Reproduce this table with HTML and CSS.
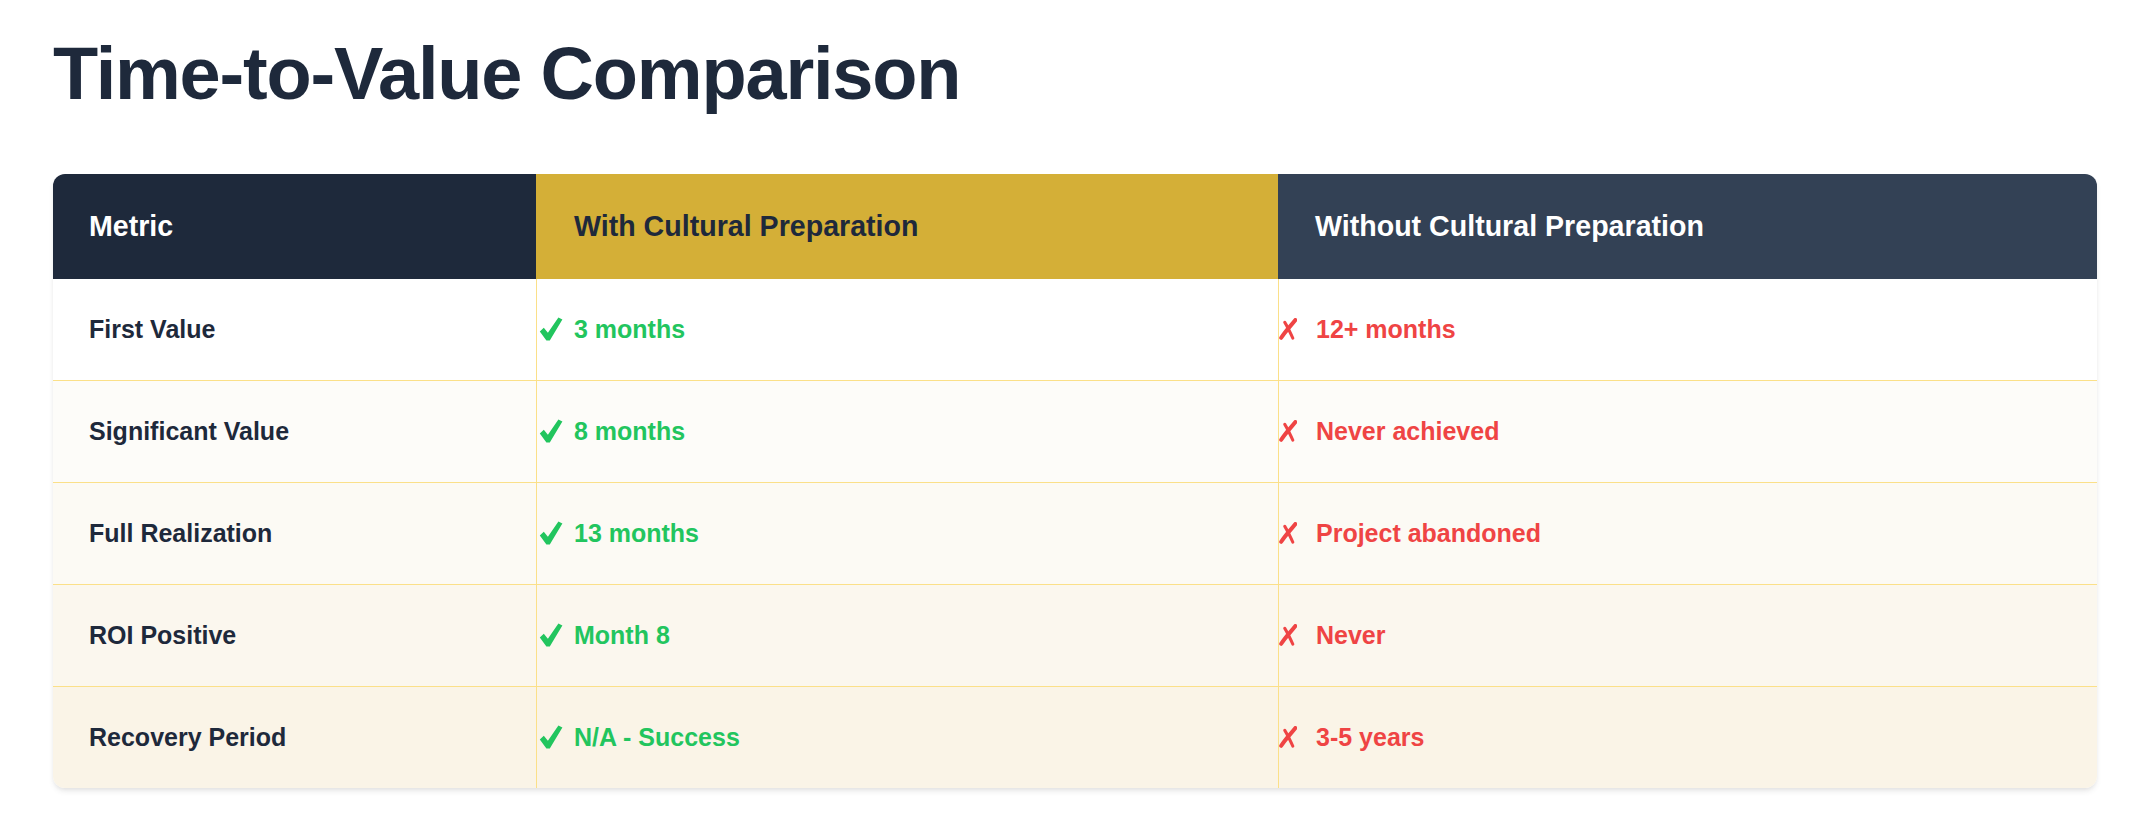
FILE: index.html
```html
<!DOCTYPE html>
<html lang="en">
<head>
<meta charset="utf-8">
<title>Time-to-Value Comparison</title>
<link rel="stylesheet" href="styles.css">
</head>
<body>
<main class="page">
  <h1 class="title">Time-to-Value Comparison</h1>
  <div class="table-card">
    <table class="compare">
      <colgroup>
        <col class="col-metric">
        <col class="col-with">
        <col class="col-without">
      </colgroup>
      <thead>
        <tr>
          <th class="th-metric">Metric</th>
          <th class="th-with">With Cultural Preparation</th>
          <th class="th-without">Without Cultural Preparation</th>
        </tr>
      </thead>
      <tbody>
        <tr>
          <td class="metric">First Value</td>
          <td class="val good"><span class="cell"><span class="mark"><svg class="check" viewBox="0 0 24 24"><path d="M0.8 14.4 L4.8 10.8 L8.9 15.8 L19.4 0.4 L23.4 2.6 L10.8 23.4 L7.4 23.4 Z"/></svg></span>3 months</span></td>
          <td class="val bad"><span class="cell"><span class="mark"><svg class="cross" viewBox="0 0 18 22"><path d="M16.4 2 C 12 7.5, 6.5 13, 2.2 19.8" /><path class="thin" d="M5.8 4.4 C 8.6 9, 11 14, 13.8 20.2" /></svg></span>12+ months</span></td>
        </tr>
        <tr>
          <td class="metric">Significant Value</td>
          <td class="val good"><span class="cell"><span class="mark"><svg class="check" viewBox="0 0 24 24"><path d="M0.8 14.4 L4.8 10.8 L8.9 15.8 L19.4 0.4 L23.4 2.6 L10.8 23.4 L7.4 23.4 Z"/></svg></span>8 months</span></td>
          <td class="val bad"><span class="cell"><span class="mark"><svg class="cross" viewBox="0 0 18 22"><path d="M16.4 2 C 12 7.5, 6.5 13, 2.2 19.8" /><path class="thin" d="M5.8 4.4 C 8.6 9, 11 14, 13.8 20.2" /></svg></span>Never achieved</span></td>
        </tr>
        <tr>
          <td class="metric">Full Realization</td>
          <td class="val good"><span class="cell"><span class="mark"><svg class="check" viewBox="0 0 24 24"><path d="M0.8 14.4 L4.8 10.8 L8.9 15.8 L19.4 0.4 L23.4 2.6 L10.8 23.4 L7.4 23.4 Z"/></svg></span>13 months</span></td>
          <td class="val bad"><span class="cell"><span class="mark"><svg class="cross" viewBox="0 0 18 22"><path d="M16.4 2 C 12 7.5, 6.5 13, 2.2 19.8" /><path class="thin" d="M5.8 4.4 C 8.6 9, 11 14, 13.8 20.2" /></svg></span>Project abandoned</span></td>
        </tr>
        <tr>
          <td class="metric">ROI Positive</td>
          <td class="val good"><span class="cell"><span class="mark"><svg class="check" viewBox="0 0 24 24"><path d="M0.8 14.4 L4.8 10.8 L8.9 15.8 L19.4 0.4 L23.4 2.6 L10.8 23.4 L7.4 23.4 Z"/></svg></span>Month 8</span></td>
          <td class="val bad"><span class="cell"><span class="mark"><svg class="cross" viewBox="0 0 18 22"><path d="M16.4 2 C 12 7.5, 6.5 13, 2.2 19.8" /><path class="thin" d="M5.8 4.4 C 8.6 9, 11 14, 13.8 20.2" /></svg></span>Never</span></td>
        </tr>
        <tr>
          <td class="metric">Recovery Period</td>
          <td class="val good"><span class="cell"><span class="mark"><svg class="check" viewBox="0 0 24 24"><path d="M0.8 14.4 L4.8 10.8 L8.9 15.8 L19.4 0.4 L23.4 2.6 L10.8 23.4 L7.4 23.4 Z"/></svg></span>N/A - Success</span></td>
          <td class="val bad"><span class="cell"><span class="mark"><svg class="cross" viewBox="0 0 18 22"><path d="M16.4 2 C 12 7.5, 6.5 13, 2.2 19.8" /><path class="thin" d="M5.8 4.4 C 8.6 9, 11 14, 13.8 20.2" /></svg></span>3-5 years</span></td>
        </tr>
      </tbody>
    </table>
  </div>
</main>
</body>
</html>
```
FILE: styles.css
```css
html, body {
  margin: 0;
  padding: 0;
  background: #ffffff;
}

body {
  font-family: "Liberation Sans", Arial, Helvetica, sans-serif;
  color: #1e293b;
}

.page {
  padding: 30px 51px 40px 53px;
}

.title {
  margin: 0 0 55px;
  font-size: 74px;
  line-height: 1.2;
  font-weight: 700;
  letter-spacing: -1.2px;
  color: #1e293b;
}

.table-card {
  border-radius: 12px;
  overflow: hidden;
  background: #ffffff;
  box-shadow: 0 4px 6px -1px rgba(0, 0, 0, 0.09), 0 2px 4px -1px rgba(0, 0, 0, 0.05);
}

.compare {
  width: 100%;
  table-layout: fixed;
  border-collapse: separate;
  border-spacing: 0;
}

.col-metric { width: 483px; }
.col-with { width: 742px; }
.col-without { width: auto; }

.compare th {
  padding: 35px 36px 35px 38px;
  font-size: 28.6px;
  line-height: 35px;
  font-weight: 700;
  text-align: left;
}

.th-metric {
  background: #1e293b;
  color: #ffffff;
  padding-left: 36px !important;
}

.th-with {
  background: #d4af37;
  color: #1e293b;
}

.th-without {
  background: #334155;
  color: #ffffff;
  padding-left: 37px !important;
}

.compare td {
  padding: 35px 36px;
  font-size: 25px;
  line-height: 31px;
  font-weight: 700;
  border-bottom: 1px solid #fbe089;
  vertical-align: middle;
}

.compare tbody tr:last-child td {
  border-bottom: none;
}

.compare td.metric {
  padding-left: 36px;
  color: #1e293b;
}

.compare td.val {
  padding-left: 0;
  border-left: 1px solid #fbe089;
}

.cell {
  display: flex;
  align-items: center;
}

.mark {
  flex: 0 0 37px;
  display: flex;
  align-items: center;
}

.good { color: #22c55e; }
.bad { color: #ef4444; }

.check {
  width: 24px;
  height: 24px;
  margin-left: 2px;
  fill: #22c55e;
}

.cross {
  width: 18px;
  height: 22px;
  margin-left: 0;
  fill: none;
  stroke: #ef4444;
  stroke-width: 4;
  stroke-linecap: round;
}

.cross .thin {
  stroke-width: 3;
}

.compare tbody tr:nth-child(1) td { background: #ffffff; }
.compare tbody tr:nth-child(2) td { background: #fdfcf9; }
.compare tbody tr:nth-child(3) td { background: #fcfaf4; }
.compare tbody tr:nth-child(4) td { background: #fbf7ee; }
.compare tbody tr:nth-child(5) td { background: #faf4e7; }
```
